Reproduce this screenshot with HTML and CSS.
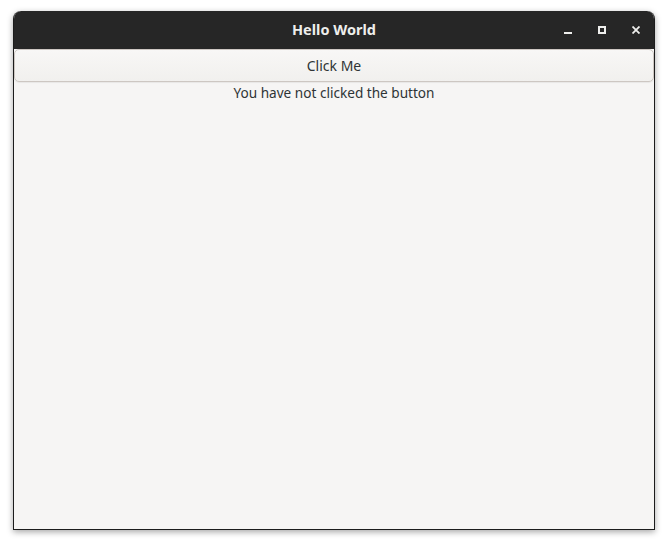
FILE: index.html
```html
<!DOCTYPE html>
<html>
<head>
<meta charset="utf-8">
<link rel="stylesheet" href="styles.css">
</head>
<body>
<div class="window">
  <div class="titlebar">
    <div class="title">Hello World</div>
    <div class="controls">
      <span class="ctl"><svg width="8" height="8" viewBox="0 0 8 8"><rect x="0" y="6" width="8" height="2" fill="#eeeeec"/></svg></span>
      <span class="ctl"><svg width="8" height="8" viewBox="0 0 8 8"><rect x="1" y="1" width="6" height="6" fill="none" stroke="#eeeeec" stroke-width="2"/></svg></span>
      <span class="ctl"><svg width="8" height="8" viewBox="0 0 8 8"><path d="M0.5 0.5 L7.5 7.5 M7.5 0.5 L0.5 7.5" stroke="#eeeeec" stroke-width="1.8"/></svg></span>
    </div>
  </div>
  <div class="content">
    <button class="btn">Click Me</button>
    <div class="label">You have not clicked the button</div>
  </div>
</div>
</body>
</html>
```
FILE: styles.css
```css
html, body {
  margin: 0;
  padding: 0;
  background: #ffffff;
}
body {
  width: 668px;
  height: 546px;
  overflow: hidden;
  font-family: "Noto Sans", "DejaVu Sans", sans-serif;
}
.window {
  margin: 11px 0 0 13px;
  width: 642px;
  height: 519px;
  box-sizing: border-box;
  border: 1px solid #1c1c1c;
  border-top: none;
  border-radius: 8px 8px 0 0;
  background: #f6f5f4;
  box-shadow: 0 2px 6px rgba(0,0,0,0.35);
  display: flex;
  flex-direction: column;
  overflow: hidden;
}
.titlebar {
  height: 38px;
  flex: none;
  background: #262626;
  position: relative;
  display: flex;
  align-items: center;
  justify-content: center;
  margin: 0 -1px;
  border-radius: 8px 8px 0 0;
}
.title {
  color: #eeeeec;
  font-weight: bold;
  font-size: 14.5px;
  line-height: 20px;
  margin-top: -2px;
}
.controls {
  position: absolute;
  right: 15px;
  top: 15px;
  display: flex;
  gap: 26px;
}
.ctl {
  display: block;
  width: 8px;
  height: 8px;
}
.ctl svg { display: block; }
.content {
  display: flex;
  flex-direction: column;
  align-items: stretch;
}
.btn {
  margin: 0;
  height: 33px;
  border: 1px solid #cdc7c2;
  border-radius: 5px;
  background: linear-gradient(#f8f7f6, #f1f0ee);
  box-shadow: 0 1px 1px rgba(0,0,0,0.06);
  font-family: inherit;
  font-size: 14px;
  line-height: 18px;
  color: #2e3436;
  padding: 1px 0 0;
}
.label {
  text-align: center;
  font-size: 13.6px;
  color: #2e3436;
  line-height: 20px;
  margin-top: 1px;
}
```
